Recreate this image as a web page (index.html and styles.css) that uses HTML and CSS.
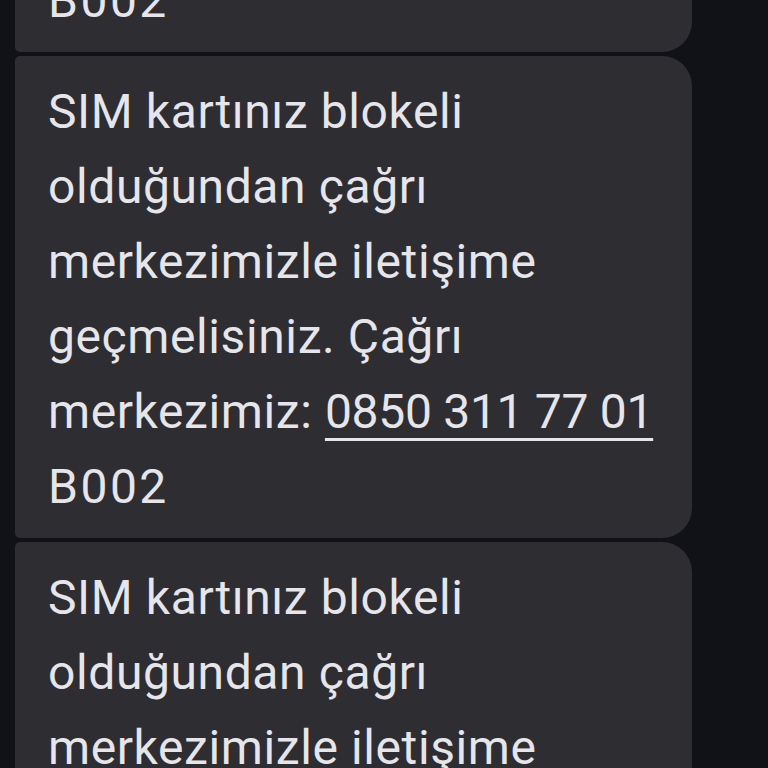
FILE: index.html
```html
<!DOCTYPE html>
<html lang="tr">
<head>
<meta charset="utf-8">
<link rel="stylesheet" href="styles.css">
</head>
<body>
<div class="thread">
  <div class="bubble">SIM kartınız blokeli olduğundan çağrı merkezimizle iletişime geçmelisiniz. Çağrı merkezimiz: <span class="phone">0850 311 77 01</span><br><span class="code">B002</span></div>
  <div class="bubble">SIM kartınız blokeli olduğundan çağrı merkezimizle iletişime geçmelisiniz. Çağrı merkezimiz: <span class="phone">0850 311 77 01</span><br><span class="code">B002</span></div>
  <div class="bubble">SIM kartınız blokeli olduğundan çağrı merkezimizle iletişime geçmelisiniz. Çağrı merkezimiz: <span class="phone">0850 311 77 01</span><br><span class="code">B002</span></div>
</div>
</body>
</html>
```
FILE: styles.css
```css
html, body {
  margin: 0;
  padding: 0;
  background: #101218;
  height: 100%;
  overflow: hidden;
}
.thread {
  display: flex;
  flex-direction: column;
  gap: 4px;
  margin-top: -430px;
  padding-left: 15px;
}
.bubble {
  box-sizing: border-box;
  width: 677px;
  background: #2d2d32;
  border-radius: 5px 30px 30px 5px;
  padding: 18px 20px 14px 33px;
  color: #e6e5ea;
  font-family: Roboto, "Noto Sans", sans-serif;
  font-size: 48px;
  letter-spacing: 0.6px;
  line-height: 75px;
}
.phone {
  white-space: nowrap;
  letter-spacing: -0.3px;
  text-decoration: underline;
  text-decoration-thickness: 3px;
  text-underline-offset: 10px;
}
.code {
  letter-spacing: 2.5px;
}
```
